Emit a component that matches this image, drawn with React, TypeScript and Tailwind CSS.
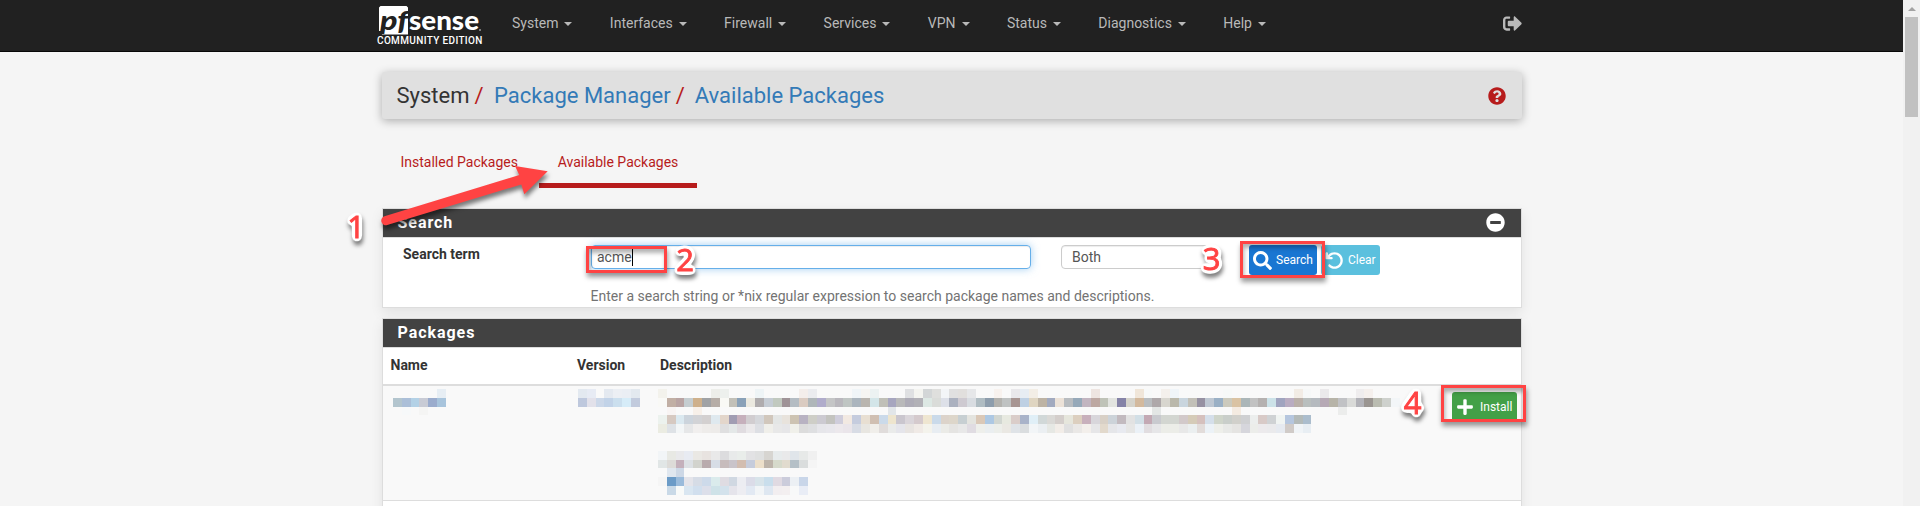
import type { ReactNode } from "react";
import { FaMinusCircle, FaPlus, FaQuestionCircle, FaSearch, FaSignOutAlt } from "react-icons/fa";
import { FaArrowRotateLeft } from "react-icons/fa6";

const menus = ["System", "Interfaces", "Firewall", "Services", "VPN", "Status", "Diagnostics", "Help"];

const CELL = 8.83;

/* Each row is a list of hex colours; "-" leaves a cell empty and a number skips that many cells. */
const nameCells = [
  "5 e7eef4",
  "b3c5ce abbfd8 b3d1e6 c8cbd5 9baccd a8c4dc",
  "- f7f9fa - f5f5f4",
];
const versionCells = [
  "e3e9f0 e7ebf4 - e4e9f0 eceff4 eaeef4 e3e9ef",
  "bec8dd e2e1ea ccd8e9 c2d3e8 cbdfee d6ecf8 c2cbdd",
];
const descriptionCells = [
  "f3f2ec 5 edeeea edf0ed 3 eef4f6 4 f4eeeb ebecef 4 f0f5f8 f6f5f2 ecf2f2 3 dfe0e2 f4f4f0 d3d6d7 dfdfdd f3f5f7 e0e0e0 e1dfdd e6e7e9 2 f8f2ee - e9e8eb e7edf3 f3eee6 6 eee5e1 4 f0e6d9 f7f9f9 - f4f0ec f0f5f9 5 f7f9f8 7 f2ece5 f6f8f8 - ebe9eb 3 efedee f5f0ed",
  "f9f9f6 c1afa4 b9a4a3 c5cdd0 ceb08b a0a2a5 b6ada7 f9f9f5 c2c0b8 8aa1b8 ebe9e0 afacae c5ccd4 c1c9bf 9f9397 b4bcc3 dacbc1 afb6b9 b0accb c4c5c6 b9b7bd bfc5c3 abb5be b9b5af d3e5e8 c0c0b8 a7a6bf b9b9ba aeacb7 b2b1b7 dde8e4 dadcd9 dde0e8 abb1bf cecad1 d8dce1 afbcc2 8d9dac b3b2ae bfc2c2 a79592 bed0e3 dfd5c1 bdb3a4 a2aabf ece2d8 b8bcc0 96a9b9 c2b5c0 bda8a2 bfc3b8 e2e4e0 8583a7 d5d3cb d3b99d b9bdc0 aea8aa d8d6cf bab8ab c9d5de c2c0b8 9691a2 bec7d2 9ab0c5 cccabd dac3a3 abb6b8 c2c2c2 b5b1b0 cce2e8 a0a4bf b9acc1 bab0a9 b9bfbe b5babf b6a9b5 b7b4a8 c1c2c5 d9dad8 b2b2b8 9a9591 babcb1 ced1cd f3f6f8",
  "- f8f4f3 2 f7f0e9 21 e2e6e9 29 e3e6e5 8 f4ebe1 11 ecedec",
  "ecf2ee d6c9c1 dbe9f0 ccd4dc d2d3d6 d3d0d0 dfe9ef e3d6cb a19db3 c6b0bc d1cdd0 d5d7db d1c7bc e4e6e5 e8e3dc cdc3b2 b8b2c2 cecec7 cccad1 c3c3bf cfcddb f2e9e2 c5ccde e8dfd2 d0bfb2 cbdaea eee5ce cac6ce dad5da d5cacd efe6d1 cadaea dcd3ca ddd6ca c7cfd2 e4e4df dac8b7 adc8e3 d1d6d1 e7e9e0 dacdc9 a9b3c9 e0eff7 d1d8d8 dad9d6 d4cecb e6e6dc dccfbf c8b0bc d8d6db d8d0c6 ccd3d9 c2babf e2e2e2 d2dfe6 c3a9b4 c9cacf d3d6d1 d3d6d1 d2c9ca d5cbb8 d5c0bd d5dfea cfd5ca c9ceca d1d0cb cfd0d2 eceeed d8cac7 cfd2d4 f0f4f2 b5c6de b3bab9 abbdcd",
  "ebece2 dee2e6 f3f6f7 e6e7e8 f1efee eeecea edebe9 dfdfe0 e4e8e8 e0dce0 ebe9eb dddfe4 f0efea e8e8e8 e6e6e8 f0f0ea dcdcdc dedfe1 e6e6ea e8e7ec ece8ec eae5ea d8dce5 e8e6e1 f0eeea e0dcdb eaebea e5e5eb e8e4e1 f0eae6 f4f3ec e8edf2 ebebe7 e5e4e2 e8e8e8 e0dce2 eeefeb eaeef0 eceeea eae8e3 dfe3e7 dadddf f2f5f7 ebeff2 e6e8e4 f2ede8 e0e0e0 eae8e6 f3efeb e6e6e8 e2d9cc e5e6e9 e8eaf0 e6e6e5 ebf1f7 e1dde0 e6e6e8 ecede8 ecede8 e8e8e8 ebeff0 e2dcda ecf2f7 eeefea e8e9e7 e5e4e2 d6d6dc ecedea eceaec eaeaec e6eaf0 d0cbc8 f0f4f7 e8eef3",
  "",
  "",
  "f2f5f7 e8e9e4 e9e9eb e8ebf2 eae8e4 e8e3e0 e9e9e9 dcdcde e8eaea e9edea e2e2e4 dfe0e0 d7d5d1 e7ebec e9e9ea e0e5ea e7e9e8 f0f0f0",
  "e1e6e6 dddbd8 c4b0bb dce0e4 d2d3cd b9abad d7dde6 c7bcbc c9c4ca d2bdb0 c6ccdb ecdfca bdb4aa d6dacb e1dbce b5c0c7 dadddd f5f5f5",
  "- e0e7ef cdd8e6",
  "f5f5f5 6b9bc7 9abbdb e4e4ea d6dce6 cddaea daebec dfdce2 d0d8e2 ecedf2 dbdce8 d8e4ea c9deec e0dae2 cbccdb ecf0f4 c9d6e9",
  "- c9d9e7 f8faf9 d9e6f1 d1dfee dcdfea cee2e8 d3e2ec e5e4eb ededf2 e2e9f3 f2f5f7 dee7f1 f2eef0 f3eff0 f8f9f9 e9edf6",
];

function Mosaic({ rows, columns }: { rows: string[]; columns: number }) {
  const cells: ReactNode[] = [];
  rows.forEach((row, y) => {
    let x = 0;
    row.split(" ").forEach((token) => {
      if (token.length === 6) {
        const left = Math.round(x * CELL);
        const top = Math.round(y * CELL);
        cells.push(
          <rect
            key={`${x}-${y}`}
            x={left}
            y={top}
            width={Math.round((x + 1) * CELL) - left}
            height={Math.round((y + 1) * CELL) - top}
            fill={`#${token}`}
          />,
        );
        x += 1;
      } else {
        x += token === "-" ? 1 : Number(token);
      }
    });
  });
  return (
    <svg
      className="block"
      shapeRendering="crispEdges"
      width={Math.ceil(columns * CELL)}
      height={Math.ceil(rows.length * CELL)}
    >
      {cells}
    </svg>
  );
}

function Logo() {
  return (
    <div className="w-[106px] shrink-0 pt-[5px]">
      <svg className="block overflow-visible" width="106" height="31" viewBox="0 0 106 31">
        <path d="M4.500 1H30.500L32 2.500V29.500H6L5 26H3V2.500Z" fill="#fff" />
        <text x="4" y="24.500" fontFamily="Lato" fontSize="26" fontWeight="900" fontStyle="italic" fill="#212121" textLength="28" lengthAdjust="spacingAndGlyphs">
          pf
        </text>
        <text x="33" y="24.800" fontFamily="Lato" fontSize="27" fontWeight="900" fill="#fff" textLength="70" lengthAdjust="spacingAndGlyphs">
          sense
        </text>
        <circle cx="104" cy="25" r="1" fill="#999" />
      </svg>
      <div className="whitespace-nowrap pl-px text-[10px] font-medium leading-[9px] tracking-[0.35px] text-white">COMMUNITY EDITION</div>
    </div>
  );
}

function Caret() {
  return <span className="mt-px h-0 w-0 border-x-4 border-t-4 border-x-transparent border-t-[#b9b9b9]" />;
}

function Panel({ title, action, className, children }: { title: string; action?: ReactNode; className: string; children: ReactNode }) {
  return (
    <section className={`border border-[#ddd] bg-white shadow-[0_5px_12px_rgba(0,0,0,0.08)] ${className}`}>
      <header className="flex h-[29px] items-center justify-between border-b border-[#ddd] bg-[#424242] pl-[14.5px] pr-4 text-[16px] font-bold tracking-[0.95px] text-white">
        <h2 className="leading-5">{title}</h2>
        {action}
      </header>
      {children}
    </section>
  );
}

function Highlight({ className }: { className: string }) {
  return <div className={`absolute border-[3px] border-[#ff4343] shadow-[1px_4px_5px_rgba(0,0,0,0.4),inset_1px_4px_4px_rgba(0,0,0,0.3)] ${className}`} />;
}

function Step({ n, x, y }: { n: string; x: number; y: number }) {
  return (
    <text
      x={x}
      y={y}
      textAnchor="middle"
      fontFamily="Open Sans"
      fontSize="31"
      fill="#ff4343"
      stroke="#ff4343"
      strokeWidth="0.9"
      filter="url(#white-outline)"
    >
      {n}
    </text>
  );
}

function Annotations() {
  return (
    <div className="pointer-events-none absolute inset-0">
      <Highlight className="left-[586px] top-[246px] h-[27px] w-[81px]" />
      <Highlight className="left-[1240px] top-[241px] h-[37px] w-[85px]" />
      <Highlight className="left-[1441px] top-[385px] h-[37px] w-[85px]" />
      <svg className="absolute inset-0 drop-shadow-[1px_4px_2px_rgba(0,0,0,0.5)]" width="1903" height="506">
        <defs>
          <filter id="white-outline" x="-50%" y="-20%" width="200%" height="140%" colorInterpolationFilters="sRGB">
            <feGaussianBlur in="SourceAlpha" stdDeviation="2" />
            <feComponentTransfer>
              <feFuncR type="linear" slope="0" intercept="1" />
              <feFuncG type="linear" slope="0" intercept="1" />
              <feFuncB type="linear" slope="0" intercept="1" />
              <feFuncA type="linear" slope="18" intercept="-0.6" />
            </feComponentTransfer>
            <feMerge>
              <feMergeNode />
              <feMergeNode in="SourceGraphic" />
            </feMerge>
          </filter>
        </defs>
        <path d="M384.500 216.200L519.300 175L515 166L547.700 171.300L524.300 194.300L521.300 184.500L387.200 225A4.600 4.600 0 0 1 384.500 216.200Z" fill="#ff4343" />
        <Step n="1" x={356} y={237.500} />
        <Step n="2" x={685} y={270.500} />
        <Step n="3" x={1211.500} y={270} />
        <Step n="4" x={1412.500} y={414} />
      </svg>
    </div>
  );
}

export default function App() {
  return (
    <div className="flex h-[506px] w-[1920px] overflow-hidden bg-[#f5f5f5] font-['Roboto',sans-serif] text-sm text-[#333]">
      <div className="relative h-full w-[1903px] overflow-hidden">
        <nav className="h-[52px] border-b border-[#080808] bg-[#212121]">
          <div className="flex h-full pl-[376px] pr-[381px]">
            <Logo />
            <ul className="ml-[30px] flex h-[46px] items-center gap-[37.4px] text-[#b9b9b9]">
              {menus.map((menu) => (
                <li key={menu} className="flex items-center gap-[6px]">
                  {menu}
                  <Caret />
                </li>
              ))}
            </ul>
            <FaSignOutAlt className="ml-auto mt-[14px] size-[19px] text-[#b9b9b9]" />
          </div>
        </nav>

        <main className="ml-[382px] w-[1140px]">
          <header className="mt-5 flex h-[47px] items-center rounded-[3px] bg-[#e0e0e0] pl-[14.5px] pr-4 text-[22px] shadow-[0_2px_10px_rgba(0,0,0,0.3)]">
            <span>System</span>
            <span className="ml-[5px] text-[#b71c1c]">/</span>
            <a className="ml-[10.5px] text-[#337ab7]">Package Manager</a>
            <span className="ml-[5px] text-[#b71c1c]">/</span>
            <a className="ml-[10px] text-[#337ab7]">Available Packages</a>
            <FaQuestionCircle className="ml-auto mt-px size-[18px] text-[#b71c1c]" />
          </header>

          <div className="mt-[20px] flex h-[49px] text-[#b71c1c]">
            <a className="flex h-full w-[157px] pl-[18.5px] pt-[13px]">Installed Packages</a>
            <a className="flex h-full w-[158px] justify-center border-b-[5px] border-[#b71c1c] pt-[13px]">Available Packages</a>
          </div>

          <Panel title="Search" className="mt-[20px] h-[100px]" action={<FaMinusCircle className="mb-px size-[19px]" />}>
            <div className="flex items-start pt-[7px]">
              <label className="mt-[-1px] w-[208px] pl-5 font-bold leading-5">Search term</label>
              <div className="flex h-6 w-[440px] items-center rounded-[4px] border border-[#66afe9] pl-[5px] text-[#555] shadow-[inset_0_1px_1px_rgba(0,0,0,0.075),0_0_8px_rgba(102,175,233,0.6)]">
                acme
                <span className="h-[17px] w-px bg-black" />
              </div>
              <div className="ml-[30px] flex h-6 w-[152px] items-center rounded-[4px] border border-[#ccc] pl-[10px] text-[#555] shadow-[inset_0_1px_1px_rgba(0,0,0,0.075)]">
                Both
              </div>
              <button className="ml-9 flex h-[30px] w-[68px] items-center gap-1 rounded-[3px] bg-[#1976d2] pl-[4px] text-xs text-white">
                <FaSearch className="size-[19px]" />
                Search
              </button>
              <button className="ml-1 flex h-[30px] w-[59px] items-center gap-1 rounded-[3px] bg-[#5bc0de] pl-[4px] text-xs text-white">
                <FaArrowRotateLeft className="size-[19px]" />
                Clear
              </button>
            </div>
            <p className="ml-[207.500px] mt-[11px] leading-5 text-[#737373]">
              Enter a search string or *nix regular expression to search package names and descriptions.
            </p>
          </Panel>

          <Panel title="Packages" className="mt-[10px] h-[220px]">
            <div className="flex h-[38px] items-center border-b-2 border-[#ddd] pb-[2px] font-bold">
              <div className="w-[186px] pl-[7.5px]">Name</div>
              <div className="w-[83px] pl-2">Version</div>
              <div className="pl-2">Description</div>
            </div>
            <div className="flex h-[115px] items-start border-b border-[#ddd] bg-[#f9f9f9] pt-[3px]">
              <div className="w-[195px] pl-[10px]">
                <Mosaic rows={nameCells} columns={6} />
              </div>
              <div className="w-[80px]">
                <Mosaic rows={versionCells} columns={7} />
              </div>
              <Mosaic rows={descriptionCells} columns={84} />
              <button className="ml-auto mr-1 mt-[3px] flex h-[30px] w-[65px] items-center gap-[6px] rounded-[3px] bg-[#43a047] pl-1 text-xs text-white">
                <FaPlus className="size-[18px]" />
                Install
              </button>
            </div>
          </Panel>
        </main>
        <Annotations />
      </div>

      <div className="flex w-[17px] flex-col items-center bg-[#f1f1f1]">
        <span className="mt-[7px] h-0 w-0 border-x-4 border-b-4 border-x-transparent border-b-[#a3a3a3]" />
        <span className="mt-[6px] h-[100px] w-[13px] bg-[#c1c1c1]" />
      </div>
    </div>
  );
}
